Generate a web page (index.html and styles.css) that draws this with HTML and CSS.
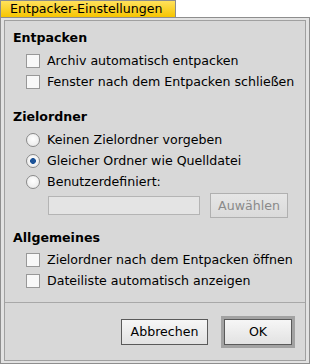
FILE: index.html
```html
<!DOCTYPE html>
<html lang="de">
<head>
    <meta charset="UTF-8">
    <title>Entpacker-Einstellungen</title>
    <link rel="stylesheet" href="styles.css">
</head>
<body>
    <div class="tab">Entpacker-Einstellungen</div>
    <div class="window">
        <div class="panel">
            <div class="main">
                <div class="section">
                    <h3>Entpacken</h3>
                    <label class="row"><input type="checkbox"> Archiv automatisch entpacken</label>
                    <label class="row"><input type="checkbox"> Fenster nach dem Entpacken schließen</label>
                </div>
                <div class="section">
                    <h3>Zielordner</h3>
                    <label class="row"><input type="radio" name="dest"> Keinen Zielordner vorgeben</label>
                    <label class="row"><input type="radio" name="dest" checked> Gleicher Ordner wie Quelldatei</label>
                    <label class="row"><input type="radio" name="dest"> Benutzerdefiniert:</label>
                    <div class="path-row">
                        <input type="text" class="path" disabled>
                        <button class="btn" disabled>Auwählen</button>
                    </div>
                </div>
                <div class="section general">
                    <h3>Allgemeines</h3>
                    <label class="row"><input type="checkbox"> Zielordner nach dem Entpacken öffnen</label>
                    <label class="row"><input type="checkbox"> Dateiliste automatisch anzeigen</label>
                </div>
            </div>
            <div class="footer">
                <button class="btn cancel">Abbrechen</button>
                <div class="default">
                    <button class="btn ok">OK</button>
                </div>
            </div>
        </div>
    </div>
</body>
</html>
```

FILE: styles.css
```css
body {
    margin: 0;
    background-color: #fff;
    color: #000;
    font-family: "DejaVu Sans", sans-serif;
    font-size: 12.6px;
}
.tab {
    box-sizing: border-box;
    width: 176px;
    height: 17px;
    padding-left: 9px;
    line-height: 16px;
    white-space: nowrap;
    border: 1px solid #8c8c8c;
    border-bottom: none;
    background: linear-gradient(#ffe15c, #f6c500);
}
.window {
    box-sizing: border-box;
    width: 310px;
    height: 347px;
    border: 1px solid #8e8e8e;
    padding: 2px 3px;
    background-color: #e2e2e2;
}
.panel {
    box-sizing: border-box;
    height: 100%;
    border: 1px solid #a0a0a0;
    background-color: #d8d8d8;
    display: flex;
    flex-direction: column;
}
.main {
    padding: 9px 8px 11px;
    border-bottom: 1px solid #a8a8a8;
}
.section {
    display: flex;
    flex-direction: column;
}
.section + .section {
    margin-top: 17px;
}
.section.general {
    margin-top: 12px;
}
h3 {
    margin: 0 0 4px;
    font-size: 12.6px;
    line-height: 16px;
}
.general h3 {
    margin-bottom: 3px;
}
.row {
    display: flex;
    align-items: center;
    gap: 7px;
    height: 21px;
    padding-left: 13px;
    white-space: nowrap;
}
input[type=checkbox],
input[type=radio] {
    appearance: none;
    margin: 0;
    width: 14px;
    height: 14px;
    box-sizing: border-box;
    border: 1px solid #989898;
    background-color: #f8f8f8;
}
input[type=radio] {
    border-radius: 50%;
    border-color: #8a8a8a;
    background: radial-gradient(circle at 50% 40%, #fff, #e6e6e6);
}
input[type=radio]:checked {
    background: radial-gradient(circle, #1c5398 0 2.6px, transparent 3.2px),
                radial-gradient(circle at 50% 40%, #fff, #e6e6e6);
}
.path-row {
    display: flex;
    align-items: center;
    gap: 10px;
    margin-top: 1px;
    padding-left: 35px;
}
.path {
    box-sizing: border-box;
    width: 152px;
    height: 19px;
    margin: 0;
    border: 1px solid #b4b4b4;
    background-color: #e4e4e4;
}
.btn {
    box-sizing: border-box;
    height: 26px;
    margin: 0;
    border: 1px solid #5a5a5a;
    background: linear-gradient(#f6f6f6, #e2e2e2);
    font-family: "DejaVu Sans", sans-serif;
    font-size: 12.6px;
    color: #000;
}
.btn:disabled {
    width: 78px;
    height: 25px;
    border-color: #b0b0b0;
    background: linear-gradient(#e6e6e6, #dadada);
    color: #8a8a8a;
}
.footer {
    flex: 1;
    display: flex;
    justify-content: flex-end;
    align-items: center;
    gap: 13px;
    padding-right: 10px;
}
.cancel {
    width: 87px;
}
.default {
    padding: 3px;
    background-color: #a2a2a2;
    display: flex;
}
.ok {
    width: 68px;
}
```
